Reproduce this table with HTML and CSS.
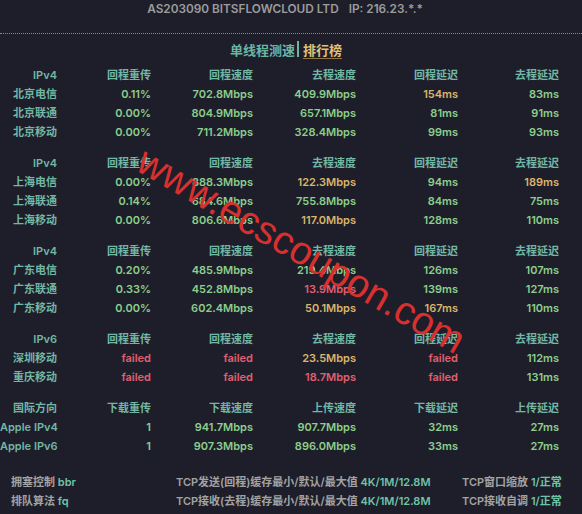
FILE: index.html
```html
<!DOCTYPE html>
<html lang="zh-CN">
<head>
<meta charset="utf-8">
<title>单线程测速</title>
<link rel="stylesheet" href="styles.css">
</head>
<body>
<div class="page">
  <div class="title"><span>AS203090 BITSFLOWCLOUD LTD</span><span>IP: 216.23.*.*</span></div>
  <div class="divider"></div>
  <div class="tabs"><span class="tab-active">单线程测速</span><span class="sep"></span><span class="tab-link">排行榜</span></div>

  <div class="results">
    <div class="section">
      <div class="hd">IPv4</div><div class="hd">回程重传</div><div class="hd">回程速度</div><div class="hd">去程速度</div><div class="hd">回程延迟</div><div class="hd">去程延迟</div>
      <div class="lb">北京电信</div><div class="g">0.11%</div><div class="g">702.8Mbps</div><div class="g">409.9Mbps</div><div class="y">154ms</div><div class="g">83ms</div>
      <div class="lb">北京联通</div><div class="g">0.00%</div><div class="g">804.9Mbps</div><div class="g">657.1Mbps</div><div class="g">81ms</div><div class="g">91ms</div>
      <div class="lb">北京移动</div><div class="g">0.00%</div><div class="g">711.2Mbps</div><div class="g">328.4Mbps</div><div class="g">99ms</div><div class="g">93ms</div>
    </div>
    <div class="section">
      <div class="hd">IPv4</div><div class="hd">回程重传</div><div class="hd">回程速度</div><div class="hd">去程速度</div><div class="hd">回程延迟</div><div class="hd">去程延迟</div>
      <div class="lb">上海电信</div><div class="g">0.00%</div><div class="g">888.3Mbps</div><div class="y">122.3Mbps</div><div class="g">94ms</div><div class="y">189ms</div>
      <div class="lb">上海联通</div><div class="g">0.14%</div><div class="g">684.6Mbps</div><div class="g">755.8Mbps</div><div class="g">84ms</div><div class="g">75ms</div>
      <div class="lb">上海移动</div><div class="g">0.00%</div><div class="g">806.6Mbps</div><div class="y">117.0Mbps</div><div class="g">128ms</div><div class="g">110ms</div>
    </div>
    <div class="section">
      <div class="hd">IPv4</div><div class="hd">回程重传</div><div class="hd">回程速度</div><div class="hd">去程速度</div><div class="hd">回程延迟</div><div class="hd">去程延迟</div>
      <div class="lb">广东电信</div><div class="g">0.20%</div><div class="g">485.9Mbps</div><div class="g">219.4Mbps</div><div class="g">126ms</div><div class="g">107ms</div>
      <div class="lb">广东联通</div><div class="g">0.33%</div><div class="g">452.8Mbps</div><div class="r">13.9Mbps</div><div class="g">139ms</div><div class="g">127ms</div>
      <div class="lb">广东移动</div><div class="g">0.00%</div><div class="g">602.4Mbps</div><div class="y">50.1Mbps</div><div class="y">167ms</div><div class="g">110ms</div>
    </div>
    <div class="section">
      <div class="hd">IPv6</div><div class="hd">回程重传</div><div class="hd">回程速度</div><div class="hd">去程速度</div><div class="hd">回程延迟</div><div class="hd">去程延迟</div>
      <div class="lb">深圳移动</div><div class="r">failed</div><div class="r">failed</div><div class="y">23.5Mbps</div><div class="r">failed</div><div class="g">112ms</div>
      <div class="lb">重庆移动</div><div class="r">failed</div><div class="r">failed</div><div class="r">18.7Mbps</div><div class="r">failed</div><div class="g">131ms</div>
    </div>
    <div class="section">
      <div class="hd">国际方向</div><div class="hd">下载重传</div><div class="hd">下载速度</div><div class="hd">上传速度</div><div class="hd">下载延迟</div><div class="hd">上传延迟</div>
      <div class="lb">Apple IPv4</div><div class="g">1</div><div class="g">941.7Mbps</div><div class="g">907.7Mbps</div><div class="g">32ms</div><div class="g">27ms</div>
      <div class="lb">Apple IPv6</div><div class="g">1</div><div class="g">907.3Mbps</div><div class="g">896.0Mbps</div><div class="g">33ms</div><div class="g">27ms</div>
    </div>
  </div>

  <div class="footer">
    <div>拥塞控制 <span class="val">bbr</span></div>
    <div>TCP发送(回程)缓存最小/默认/最大值 <span class="val">4K/1M/12.8M</span></div>
    <div>TCP窗口缩放 <span class="val">1/正常</span></div>
    <div>排队算法 <span class="val">fq</span></div>
    <div>TCP接收(去程)缓存最小/默认/最大值 <span class="val">4K/1M/12.8M</span></div>
    <div>TCP接收自调 <span class="val">1/正常</span></div>
  </div>

  <div class="watermark">www.ecscoupon.com</div>
</div>
</body>
</html>
```

FILE: styles.css
```css
* { box-sizing: border-box; }

html, body {
  margin: 0;
  padding: 0;
  background: #1e1e2a;
}

body {
  font-family: Inter, "Noto Sans CJK SC", sans-serif;
  font-weight: 600;
  overflow: hidden;
}

.page {
  position: relative;
  width: 582px;
  height: 514px;
}

.title {
  display: flex;
  justify-content: center;
  gap: 10px;
  padding-right: 12px;
  font-size: 11.8px;
  line-height: 18px;
  color: #9c9c9c;
}

.divider {
  margin-top: 15px;
  border-top: 1px dotted #8a8a8a;
}

.tabs {
  margin-top: 6px;
  display: flex;
  justify-content: center;
  align-items: center;
  height: 18px;
  font-size: 13px;
  font-weight: 700;
  padding-right: 10px;
}

.tab-active { color: #6bb6a3; }

.sep {
  width: 2px;
  height: 16px;
  margin: 0 4px 0 2px;
  background: #6bb6a3;
}

.tab-link {
  color: #e2c276;
  text-decoration: underline;
  text-decoration-color: #8a7648;
  text-underline-offset: 3px;
}

.results {
  margin-top: 8px;
  display: flex;
  flex-direction: column;
  gap: 12px;
}

.section {
  display: grid;
  grid-template-columns: 57px 94px 102px 103px 102px 101px;
  font-size: 11px;
  line-height: 19px;
  text-align: right;
  white-space: nowrap;
}

.hd, .lb { color: #72b7a5; }
.g { color: #8ccf8c; }
.y { color: #d9b66c; }
.r { color: #e0606f; }

.footer {
  margin-top: 17px;
  display: grid;
  grid-template-columns: 165px 286px auto;
  padding-left: 11px;
  font-size: 11px;
  line-height: 19px;
  color: #a3a3a3;
  white-space: nowrap;
}

.val { color: #6fc4a8; }

.watermark {
  position: absolute;
  left: 152px;
  top: 138px;
  transform: rotate(30deg);
  transform-origin: 0 0;
  font-family: "Liberation Sans", Arial, sans-serif;
  font-weight: 400;
  font-size: 39.5px;
  line-height: normal;
  color: #d8302f;
  white-space: nowrap;
  pointer-events: none;
}
```
